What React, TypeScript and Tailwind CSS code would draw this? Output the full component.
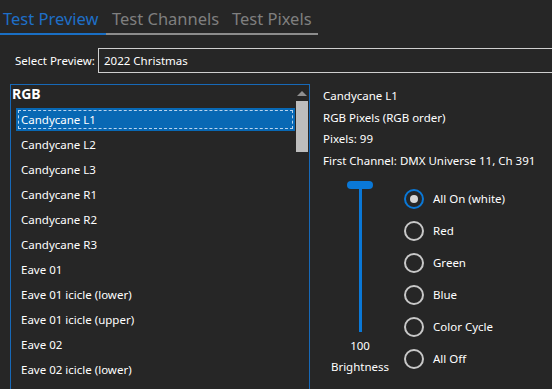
import React from 'react';

const items = [
  'Candycane L1',
  'Candycane L2',
  'Candycane L3',
  'Candycane R1',
  'Candycane R2',
  'Candycane R3',
  'Eave 01',
  'Eave 01 icicle (lower)',
  'Eave 01 icicle (upper)',
  'Eave 02',
  'Eave 02 icicle (lower)',
];

const modes = ['All On (white)', 'Red', 'Green', 'Blue', 'Color Cycle', 'All Off'];

function Radio({ label, checked }: { label: string; checked?: boolean }) {
  return (
    <div className="flex items-center h-[32px]">
      <div
        className={`w-[20px] h-[20px] rounded-full border-2 flex items-center justify-center ${
          checked ? 'border-[#0a78d7]' : 'border-[#c8c8c8]'
        }`}
      >
        {checked && <div className="w-[8px] h-[8px] rounded-full bg-[#d6d6d6]" />}
      </div>
      <span className="ml-[9px] text-[11.5px] text-white whitespace-nowrap">{label}</span>
    </div>
  );
}

export default function App() {
  return (
    <div
      className="w-[552px] h-[389px] overflow-hidden bg-[#262626] text-white"
      style={{ fontFamily: '"Segoe UI", "Noto Sans", sans-serif' }}
    >
      {/* Tabs */}
      <div className="flex h-[35px] items-end whitespace-nowrap">
        <div className="w-[106px] pl-[3px] border-b-2 border-[#1a6fc4] text-[16.5px] leading-[28px] text-[#1e6fc8]">
          Test Preview
        </div>
        <div className="w-[119px] pl-[6px] border-b-2 border-[#8c8c8c] text-[16.5px] leading-[28px] text-[#7f7f7f]">
          Test Channels
        </div>
        <div className="w-[93px] pl-[7px] border-b-2 border-[#8c8c8c] text-[16.5px] leading-[28px] text-[#7f7f7f]">
          Test Pixels
        </div>
      </div>

      {/* Preview select */}
      <div className="flex items-center mt-[13px] h-[25px]">
        <span className="ml-[15px] w-[83px] text-[11.5px] whitespace-nowrap">Select Preview:</span>
        <div className="flex-1 h-[25px] border border-[#cfcfcf] border-r-0 pl-[5px] text-[11.5px] leading-[23px]">
          2022 Christmas
        </div>
      </div>

      <div className="flex mt-[11px]">
        {/* Model list */}
        <div className="ml-[10px] w-[300px] h-[320px] border border-[#1769b8] border-b-0 flex">
          <div className="flex-1 pl-[1px] pt-[1px]">
            <div className="text-[14px] font-bold leading-[16px]">RGB</div>
            <div className="pl-[4px] pr-[1px] mt-[6px]">
              {items.map((it, i) => (
                <div key={it} className="h-[25px]">
                  <div
                    className={`h-[23px] pl-[5px] text-[11.5px] leading-[23px] whitespace-nowrap ${
                      i === 0 ? 'bg-[#0868b4] outline-1 outline-dashed outline-[#b9d4ee] -outline-offset-[3px]' : ''
                    }`}
                  >
                    {it}
                  </div>
                </div>
              ))}
            </div>
          </div>
          {/* Scrollbar */}
          <div className="w-[12px] mr-[1px] pt-[5px] flex flex-col items-center">
            <svg width="12" height="6" viewBox="0 0 12 6">
              <path d="M1 6 L6 1 L11 6 Z" fill="#8f8f8f" />
            </svg>
            <div className="mt-[5px] w-[12px] h-[51px] bg-[#bdbdbd]" />
          </div>
        </div>

        {/* Details */}
        <div className="ml-[13px] flex-1">
          <div className="text-[11.5px] leading-[21.5px] pt-[1px] whitespace-nowrap">
            <div>Candycane L1</div>
            <div>RGB Pixels (RGB order)</div>
            <div>Pixels: 99</div>
            <div>First Channel: DMX Universe 11, Ch 391</div>
          </div>
          <div className="flex mt-[10px]">
            <div className="w-[74px] flex flex-col items-center">
              <div className="w-[26px] h-[8px] rounded-full bg-[#0a78d7]" />
              <div className="w-[3px] h-[143px] bg-[#0a78d7]" />
              <div className="text-[11.5px] mt-[6px] leading-[16px]">100</div>
              <div className="text-[11.5px] mt-[5px] leading-[16px]">Brightness</div>
            </div>
            <div className="ml-[7px] mt-[2px]">
              {modes.map((m, i) => (
                <Radio key={m} label={m} checked={i === 0} />
              ))}
            </div>
          </div>
        </div>
      </div>
    </div>
  );
}
